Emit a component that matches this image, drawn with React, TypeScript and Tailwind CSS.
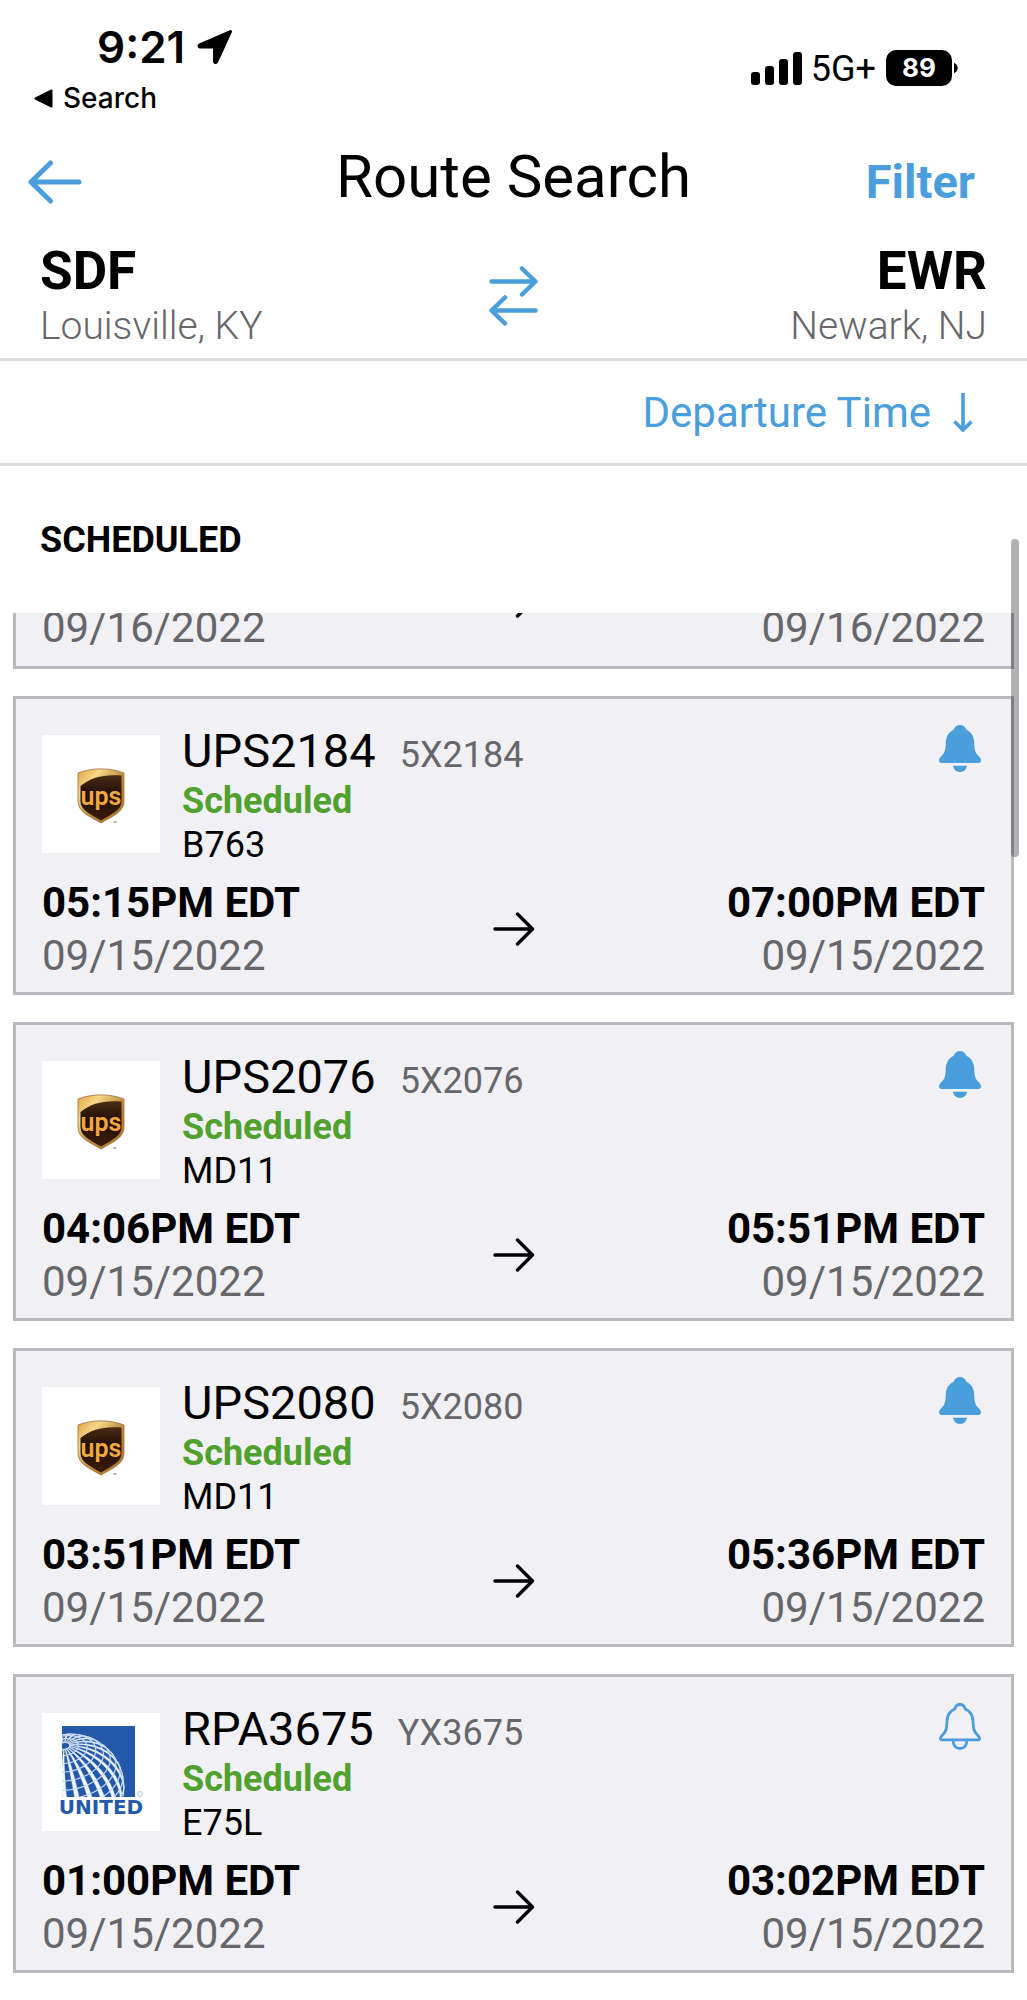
import { useState } from "react";

type Flight = {
  ident: string;
  code: string;
  status: string;
  aircraft: string;
  departTime: string;
  departDate: string;
  arriveTime: string;
  arriveDate: string;
  airline: "ups" | "united";
  alert: boolean;
};

const FLIGHTS: Flight[] = [
  {
    ident: "UPS2184",
    code: "5X2184",
    status: "Scheduled",
    aircraft: "B763",
    departTime: "05:15PM EDT",
    departDate: "09/15/2022",
    arriveTime: "07:00PM EDT",
    arriveDate: "09/15/2022",
    airline: "ups",
    alert: true,
  },
  {
    ident: "UPS2076",
    code: "5X2076",
    status: "Scheduled",
    aircraft: "MD11",
    departTime: "04:06PM EDT",
    departDate: "09/15/2022",
    arriveTime: "05:51PM EDT",
    arriveDate: "09/15/2022",
    airline: "ups",
    alert: true,
  },
  {
    ident: "UPS2080",
    code: "5X2080",
    status: "Scheduled",
    aircraft: "MD11",
    departTime: "03:51PM EDT",
    departDate: "09/15/2022",
    arriveTime: "05:36PM EDT",
    arriveDate: "09/15/2022",
    airline: "ups",
    alert: true,
  },
  {
    ident: "RPA3675",
    code: "YX3675",
    status: "Scheduled",
    aircraft: "E75L",
    departTime: "01:00PM EDT",
    departDate: "09/15/2022",
    arriveTime: "03:02PM EDT",
    arriveDate: "09/15/2022",
    airline: "united",
    alert: false,
  },
];

function UpsLogo() {
  return (
    <svg viewBox="0 0 118 118" className="w-full h-full" role="img" aria-label="UPS">
      <defs>
        <linearGradient id="upsGold" x1="0" y1="0" x2="1" y2="1">
          <stop offset="0" stopColor="#e0a040" />
          <stop offset="0.25" stopColor="#f8d88a" />
          <stop offset="0.55" stopColor="#c08a3c" />
          <stop offset="1" stopColor="#a8702a" />
        </linearGradient>
        <linearGradient id="upsBrown" x1="0" y1="0" x2="0" y2="1">
          <stop offset="0" stopColor="#4a2c14" />
          <stop offset="0.4" stopColor="#241006" />
          <stop offset="1" stopColor="#3a1c0a" />
        </linearGradient>
      </defs>
      <path
        d="M36 38 C50 32.500 68 32.500 82 38 V66 C82 77 71 81 59 88 C47 81 36 77 36 66 Z"
        fill="url(#upsGold)"
        stroke="#9a7038"
        strokeWidth="0.8"
      />
      <path
        d="M38.500 51 C49 42 63 39 79.500 40.500 V66 C79.500 75 70 79 59 85.500 C48 79 38.500 75 38.500 66 Z"
        fill="url(#upsBrown)"
      />
      <text
        x="59"
        y="70"
        textAnchor="middle"
        fill="#f0a840"
        className="font-['Roboto',sans-serif] text-[25px] font-semibold"
      >
        ups
      </text>
      <ellipse cx="73" cy="87" rx="2" ry="1" fill="#b8b0a8" />
    </svg>
  );
}

// Orthographic globe tipped towards the viewer, in logo units
const GLOBE = { cx: 29, cy: 74, r: 53 };
const TILT = 0.66;
const ROLL = 0.16;

function project(lat: number, lon: number) {
  const x = Math.cos(lat) * Math.sin(lon);
  const y = Math.sin(lat);
  const z = Math.cos(lat) * Math.cos(lon);
  const yt = y * Math.cos(TILT) - z * Math.sin(TILT);
  const zt = y * Math.sin(TILT) + z * Math.cos(TILT);
  const xr = x * Math.cos(ROLL) - yt * Math.sin(ROLL);
  const yr = x * Math.sin(ROLL) + yt * Math.cos(ROLL);
  return { x: GLOBE.cx + GLOBE.r * xr, y: GLOBE.cy - GLOBE.r * yr, visible: zt > 0 };
}

function toPath(points: { x: number; y: number; visible: boolean }[]) {
  let d = "";
  let pen = false;
  for (const p of points) {
    if (p.visible) {
      d += `${pen ? "L" : "M"}${p.x.toFixed(2)} ${p.y.toFixed(2)}`;
      pen = true;
    } else {
      pen = false;
    }
  }
  return d;
}

const rad = (deg: number) => (deg * Math.PI) / 180;

// each meridian is a thin wedge that widens away from the pole
const MERIDIANS = Array.from({ length: 24 }, (_, i) => {
  const lon = i * 15 + 5;
  const lats = Array.from({ length: 61 }, (_, k) => 84 - k * 2);
  const left = lats.map((lat) => project(rad(lat), rad(lon - 2.6)));
  const right = lats.map((lat) => project(rad(lat), rad(lon + 2.6))).reverse();
  return toPath([...left, ...right].filter((p) => p.visible)) + "Z";
});

const PARALLELS = [84, 75, 65, 55, 45, 35, 25, 15, 5, -5, -15, -25].map((lat) =>
  toPath(Array.from({ length: 121 }, (_, k) => project(rad(lat), rad(k * 3))))
);

function UnitedLogo() {
  return (
    <svg viewBox="0 0 118 118" className="w-full h-full" role="img" aria-label="United">
      <defs>
        <clipPath id="unitedSquare">
          <rect x="20" y="13" width="73" height="71" />
        </clipPath>
      </defs>
      <rect x="20" y="13" width="73" height="71" fill="#2459a9" />
      <g clipPath="url(#unitedSquare)">
        <circle cx={GLOBE.cx} cy={GLOBE.cy} r={GLOBE.r} fill="none" stroke="#a9c4e6" strokeWidth="1" />
        {MERIDIANS.map((d, i) => (
          <path key={i} d={d} fill="#f2f8fd" stroke="#f2f8fd" strokeWidth="0.4" />
        ))}
        {PARALLELS.map((d, i) => (
          <path key={i} d={d} fill="none" stroke="#c9dcf2" strokeWidth="1.2" />
        ))}
      </g>
      <circle cx="98" cy="81" r="2.500" fill="none" stroke="#9fb4d4" strokeWidth="0.8" />
      <text
        x="59"
        y="101"
        textAnchor="middle"
        fill="#2459a9"
        className="font-['DejaVu_Sans',sans-serif] text-[20px] font-bold"
      >
        UNITED
      </text>
    </svg>
  );
}

function BellIcon({ filled }: { filled: boolean }) {
  return filled ? (
    <svg viewBox="0 0 42 47" className="w-[42px] h-[47px]" fill="#4a9edc">
      <path d="M21 0 C24 0 26.500 1.800 27.300 4.800 C32.500 7.200 35 11.800 35.200 17.500 C35.400 24.500 36 27.500 39.500 31 C41 32.500 42 33.800 42 35.200 C42 37 40.800 38 39 38 H3 C1.200 38 0 37 0 35.200 C0 33.800 1 32.500 2.500 31 C6 27.500 6.600 24.500 6.800 17.500 C7 11.800 9.500 7.200 14.700 4.800 C15.500 1.800 18 0 21 0 Z" />
      <path d="M14 40.800 H28 C27.500 44.500 24.800 47 21 47 C17.200 47 14.500 44.500 14 40.800 Z" />
    </svg>
  ) : (
    <svg
      viewBox="0 0 42 47"
      className="w-[42px] h-[47px]"
      fill="none"
      stroke="#4a9edc"
      strokeWidth="2.800"
      strokeLinejoin="round"
    >
      <path d="M21 1.500 C23.800 1.500 25.600 3.200 26.200 6 C31.500 8.300 33.800 12.500 34 18 C34.200 25.500 34.800 28.500 38.500 32 C40 33.500 40.600 34.300 40.600 35.200 C40.600 36.200 40 36.800 39 36.800 H3 C2 36.800 1.400 36.200 1.400 35.200 C1.400 34.300 2 33.500 3.500 32 C7.200 28.500 7.800 25.500 8 18 C8.200 12.500 10.500 8.300 15.800 6 C16.400 3.200 18.200 1.500 21 1.500 Z" />
      <path d="M14 37 C14 42.500 17 45.500 21 45.500 C25 45.500 28 42.500 28 37" />
    </svg>
  );
}

function RouteArrow() {
  return (
    <svg
      viewBox="0 0 42 36"
      className="w-[42px] h-9"
      fill="none"
      stroke="#000"
      strokeWidth="3.400"
      strokeLinecap="round"
      strokeLinejoin="round"
    >
      <path d="M2 18 H39 M24.500 3 L39.500 18 L24.500 33" />
    </svg>
  );
}

function StatusBar() {
  return (
    <div className="flex justify-between items-start pt-[23px] pl-8 pr-[69px] font-['Inter',sans-serif]">
      <div>
        <div className="flex items-center gap-3 pl-[65px] text-[44px] leading-[48px] font-semibold">
          <span>9:21</span>
          <svg viewBox="0 0 36 36" className="w-9 h-9" fill="#000" stroke="#000" strokeWidth="3" strokeLinejoin="round">
            <path d="M33.500 2.500 L19.500 33 C18.800 34 17.500 33.500 17.500 32.500 V18 H3 C2 18 1.500 16.500 2.800 15.900 Z" />
          </svg>
        </div>
        <a href="#search" className="mt-[7px] flex items-center gap-[10px] pl-[2px] text-[28px] leading-10 font-medium">
          <svg viewBox="0 0 19 19" className="w-[19px] h-[19px]" fill="#000" stroke="#000" strokeWidth="2" strokeLinejoin="round">
            <path d="M17.500 1.500 V17.500 L1.500 9.500 Z" />
          </svg>
          <span>Search</span>
        </a>
      </div>
      <div className="mt-[27px] flex items-center h-9">
        <svg viewBox="0 0 52 33" className="w-[52px] h-[33px]">
          <rect x="0" y="20" width="9" height="13" rx="3" />
          <rect x="14" y="14" width="9" height="19" rx="3" />
          <rect x="28" y="7" width="9" height="26" rx="3" />
          <rect x="42" y="0" width="9" height="33" rx="3" />
        </svg>
        <span className="mt-[2px] ml-2 text-[36px] leading-9 font-['Roboto',sans-serif]">5G+</span>
        <span className="ml-[10px] w-[66px] h-9 rounded-[10px] bg-black text-white text-center text-[26px] leading-9 font-bold">
          89
        </span>
        <svg viewBox="0 0 4 10" className="ml-[2px] w-1 h-[10px]">
          <path d="M0 0 C5 1.500 5 8.500 0 10 Z" />
        </svg>
      </div>
    </div>
  );
}

function Endpoint({ time, date, align }: { time?: string; date: string; align: "left" | "right" }) {
  return (
    <div className={`text-[42px] leading-[53px] ${align === "right" ? "text-right" : "text-left"}`}>
      {time && <div className="font-bold">{time}</div>}
      <div className="text-[#66666b]">{date}</div>
    </div>
  );
}

function FlightCard({ flight }: { flight: Flight }) {
  const [alert, setAlert] = useState(flight.alert);

  return (
    <article className="border-[3px] border-[#b9b9bf] bg-[#f0f0f5] pt-6 pb-[10px] px-[26px]">
      <div className="flex items-start">
        <div className="mt-3 w-[118px] h-[118px] shrink-0 bg-white">
          {flight.airline === "ups" ? <UpsLogo /> : <UnitedLogo />}
        </div>
        <div className="ml-[22px] grow text-[36px] leading-[44px]">
          <h3 className="flex items-baseline gap-6 text-[47px] leading-[56px]">
            {flight.ident}
            <span className="text-[36px] leading-[44px] text-[#66666b]">{flight.code}</span>
          </h3>
          <p className="font-bold text-[#51a12f]">{flight.status}</p>
          <p>{flight.aircraft}</p>
        </div>
        <button
          type="button"
          aria-label={`Alerts for ${flight.ident}`}
          aria-pressed={alert}
          onClick={() => setAlert(!alert)}
          className="mt-[2px] mr-1 cursor-pointer"
        >
          <BellIcon filled={alert} />
        </button>
      </div>
      <div className="mt-[9px] grid grid-cols-[1fr_auto_1fr] items-center">
        <Endpoint time={flight.departTime} date={flight.departDate} align="left" />
        <RouteArrow />
        <Endpoint time={flight.arriveTime} date={flight.arriveDate} align="right" />
      </div>
    </article>
  );
}

export default function App() {
  const [reversed, setReversed] = useState(false);
  const sdf = { code: "SDF", city: "Louisville, KY" };
  const ewr = { code: "EWR", city: "Newark, NJ" };
  const [from, to] = reversed ? [ewr, sdf] : [sdf, ewr];

  return (
    <div className="min-h-screen bg-white text-black font-['Roboto',sans-serif]">
      <StatusBar />

      <header className="mt-6 grid grid-cols-[1fr_auto_1fr] items-center pl-7 pr-[52px]">
        <button type="button" aria-label="Back" className="mt-[10px] justify-self-start cursor-pointer">
          <svg
            viewBox="0 0 54 44"
            className="w-[54px] h-11"
            fill="none"
            stroke="#4a9edc"
            strokeWidth="5"
            strokeLinecap="round"
            strokeLinejoin="round"
          >
            <path d="M51 22 H3 M22.500 3 L3 22 L22.500 41" />
          </svg>
        </button>
        <h1 className="ml-6 text-[60px] leading-[70px]">Route Search</h1>
        <button type="button" className="mt-[10px] justify-self-end text-[47px] leading-[56px] font-bold text-[#4a9edc] cursor-pointer">
          Filter
        </button>
      </header>

      <div className="mt-[29px] grid grid-cols-[1fr_auto_1fr] items-center px-10 pb-[7px] border-b-[3px] border-[#dcdcde]">
        <div>
          <div className="text-[53px] leading-[60px] font-bold">{from.code}</div>
          <div className="text-[39px] leading-[50px] font-light text-[#66666b]">{from.city}</div>
        </div>
        <button type="button" aria-label="Swap airports" onClick={() => setReversed(!reversed)} className="cursor-pointer">
          <svg
            viewBox="0 0 49 60"
            className="w-[49px] h-[60px]"
            fill="none"
            stroke="#4a9edc"
            strokeWidth="4.500"
            strokeLinecap="round"
            strokeLinejoin="round"
          >
            <path d="M2.500 15.500 H46 M33 2.500 L46.500 15.500 L33 28.500" />
            <path d="M46.500 44.500 H3 M16 31.500 L2.500 44.500 L16 57.500" />
          </svg>
        </button>
        <div className="text-right">
          <div className="text-[53px] leading-[60px] font-bold">{to.code}</div>
          <div className="text-[39px] leading-[50px] font-light text-[#66666b]">{to.city}</div>
        </div>
      </div>

      <div className="flex justify-end pt-7 pb-[26px] pr-[54px] border-b-[3px] border-[#dcdcde]">
        <button type="button" className="flex items-center gap-[22px] text-[42px] leading-[48px] text-[#4a9edc] cursor-pointer">
          Departure Time
          <svg viewBox="0 0 20 40" className="w-5 h-10" fill="none" stroke="#4a9edc" strokeWidth="3.600">
            <path d="M10 0 V37 M1.500 28.500 L10 37 L18.500 28.500" />
          </svg>
        </button>
      </div>

      <main className="relative">
        <h2 className="px-10 pt-[52px] pb-[51px] text-[36px] leading-[44px] font-bold">SCHEDULED</h2>
        <div className="flex flex-col gap-[27px] px-[13px] pb-[27px]">
          {/* row scrolled part way under the section heading */}
          <div className="flex items-end h-[56px] overflow-hidden">
            <div className="grow border-[3px] border-t-0 border-[#b9b9bf] bg-[#f0f0f5] px-[26px] pb-3">
              <div className="h-[106px] grid grid-cols-[1fr_auto_1fr] items-center">
                <div className="self-end">
                  <Endpoint date="09/16/2022" align="left" />
                </div>
                <RouteArrow />
                <div className="self-end">
                  <Endpoint date="09/16/2022" align="right" />
                </div>
              </div>
            </div>
          </div>
          {FLIGHTS.map((flight) => (
            <FlightCard key={flight.ident} flight={flight} />
          ))}
        </div>
        <div className="absolute right-2 top-[73px] w-2 h-[318px] rounded-full bg-black/30" />
      </main>
    </div>
  );
}
